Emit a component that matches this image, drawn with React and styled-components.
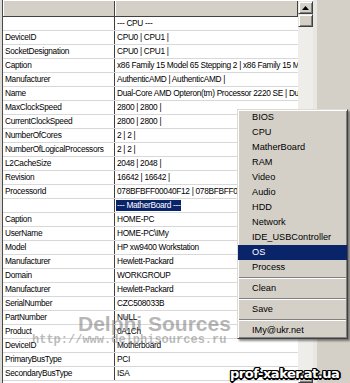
import styled, { createGlobalStyle } from "styled-components";

const GlobalStyle = createGlobalStyle`
	html, body {
		margin: 0;
		padding: 0;
		background: #d4d0c8;
		overflow: hidden;
	}
`;

const ROWS = [
	["", "--- CPU ---"],
	["DeviceID", "CPU0 | CPU1 |"],
	["SocketDesignation", "CPU0 | CPU1 |"],
	["Caption", "x86 Family 15 Model 65 Stepping 2 | x86 Family 15 Model 65 Stepping 2 |"],
	["Manufacturer", "AuthenticAMD | AuthenticAMD |"],
	["Name", "Dual-Core AMD Opteron(tm) Processor 2220 SE | Dual-Core AMD Opteron(tm) Processor 2220 SE |"],
	["MaxClockSpeed", "2800 | 2800 |"],
	["CurrentClockSpeed", "2800 | 2800 |"],
	["NumberOfCores", "2 | 2 |"],
	["NumberOfLogicalProcessors", "2 | 2 |"],
	["L2CacheSize", "2048 | 2048 |"],
	["Revision", "16642 | 16642 |"],
	["ProcessorId", "078BFBFF00040F12 | 078BFBFF00040F12 |"],
	["", "--- MatherBoard ---", true],
	["Caption", "HOME-PC"],
	["UserName", "HOME-PC\\IMy"],
	["Model", "HP xw9400 Workstation"],
	["Manufacturer", "Hewlett-Packard"],
	["Domain", "WORKGROUP"],
	["Manufacturer", "Hewlett-Packard"],
	["SerialNumber", "CZC508033B"],
	["PartNumber", "NULL"],
	["Product", "0A1Ch"],
	["DeviceID", "Motherboard"],
	["PrimaryBusType", "PCI"],
	["SecondaryBusType", "ISA"],
];

const MENU = [
	"BIOS", "CPU", "MatherBoard", "RAM", "Video", "Audio", "HDD", "Network",
	"IDE_USBController", "OS", "Process", "-", "Clean", "-", "Save", "-", "IMy@ukr.net",
];

const Page = styled.div`
	position: relative;
	width: 350px;
	height: 383px;
	overflow: hidden;
	display: flex;
	background: #d4d0c8;
	font-family: "Liberation Sans", Arial, sans-serif;
	color: #000;
`;

const Frame = styled.div`
	display: flex;
	width: 317px;
	height: 100%;
	border-left: 2px solid #dcdad6;
	box-sizing: border-box;
`;

const Inner = styled.div`
	display: flex;
	flex: 1;
	border-left: 1px solid #4a4a4a;
`;

const Grid = styled.div`
	width: 295px;
	display: flex;
	flex-direction: column;
	background: #fff;
	overflow: hidden;
`;

const HeaderRow = styled.div`
	display: flex;
	flex: none;
	height: 17px;
	box-sizing: border-box;
	background: #d4d0c8;
	border-top: 1px solid #fff;
	border-bottom: 1px solid #404040;
`;

const HeaderCell = styled.div`
	width: ${({ $w }) => ($w ? `${$w}px` : "auto")};
	flex: ${({ $w }) => ($w ? "none" : "1")};
	box-sizing: border-box;
	border-right: 1px solid #404040;
	box-shadow: inset 1px 0 #fff;
`;

const Row = styled.div`
	display: flex;
	flex: none;
	height: 14px;
	box-sizing: border-box;
	border-bottom: 1px solid #d8d8d8;
`;

const Cell = styled.div`
	box-sizing: border-box;
	padding-left: 2px;
	font-size: 8.3px;
	letter-spacing: -0.3px;
	line-height: 13px;
	white-space: nowrap;
	overflow: hidden;
`;

const KeyCell = styled(Cell)`
	width: 112px;
	flex: none;
	border-right: 1px solid #404040;
`;

const ValueCell = styled(Cell)`
	flex: 1;
`;

const Selected = styled.span`
	display: inline-block;
	background: #0a246a;
	color: #fff;
	line-height: 11px;
	padding: 0 1px;
	margin-left: -1px;
`;

const Scroll = styled.div`
	width: 15px;
	display: flex;
	flex-direction: column;
	background: #eeede9;
	border-top: 1px solid #fff;
`;

const ScrollButton = styled.div`
	height: 13px;
	flex: none;
	box-sizing: border-box;
	background: #d4d0c8;
	border: 1px solid;
	border-color: #e8e6e2 #404040 #404040 #e8e6e2;
	box-shadow: inset 1px 1px #fff, inset -1px -1px #808080;
	display: flex;
	align-items: center;
	justify-content: center;
`;

const Spacer = styled.div`
	flex: 1;
`;

const RightEdge = styled.div`
	width: 4px;
	background: #e9e7e3;
`;

const Menu = styled.div`
	position: absolute;
	left: 237px;
	top: 109px;
	width: 111px;
	box-sizing: border-box;
	background: #d4d0c8;
	border: 1px solid;
	border-color: #dedbd5 #404040 #404040 #dedbd5;
	box-shadow: inset 1px 1px #fff, inset -1px -1px #808080, 2px 2px 2px rgba(0, 0, 0, 0.45);
	font-size: 9.2px;
`;

const MenuItem = styled.div`
	height: 15px;
	line-height: 15px;
	padding-left: 14px;
	white-space: nowrap;
	background: ${({ $active }) => ($active ? "#0a246a" : "transparent")};
	color: ${({ $active }) => ($active ? "#fff" : "#000")};
`;

const Separator = styled.div`
	height: 6px;
	display: flex;
	flex-direction: column;
	justify-content: center;
	padding: 0 1px;

	&::before {
		content: "";
		display: block;
		height: 1px;
		background: #808080;
		border-bottom: 1px solid #fff;
	}
`;

const BigMark = styled.div`
	position: absolute;
	left: 78px;
	top: 313px;
	font-family: "Liberation Sans", Arial, sans-serif;
	font-weight: bold;
	font-size: 21px;
	line-height: 21px;
	color: rgba(110, 110, 110, 0.5);
	white-space: nowrap;
`;

const UrlMark = styled.div`
	position: absolute;
	left: 32px;
	top: 334px;
	font-family: "Liberation Mono", monospace;
	font-weight: bold;
	font-size: 12px;
	line-height: 12px;
	color: rgba(120, 120, 120, 0.5);
	white-space: nowrap;
`;

const SiteMark = styled.div`
	position: absolute;
	left: 230px;
	top: 367px;
	font-family: "DejaVu Sans", sans-serif;
	font-weight: bold;
	font-size: 13px;
	letter-spacing: -0.5px;
	line-height: 14px;
	color: #fff;
	white-space: nowrap;
	text-shadow: 1px 0 #000, -1px 0 #000, 0 1px #000, 0 -1px #000, 1px 1px #000,
		-1px -1px #000, 1px -1px #000, -1px 1px #000, 2px 0 #000, 0 2px #000;
`;

const Arrow = ({ down }) => (
	<svg width="7" height="4" viewBox="0 0 7 4">
		<polygon points={down ? "0,0 7,0 3.5,4" : "0,4 7,4 3.5,0"} fill="#000" />
	</svg>
);

const App = () => (
	<>
		<GlobalStyle />
		<Page>
			<Frame>
				<Inner>
					<Grid>
						<HeaderRow>
							<HeaderCell $w={112} />
							<HeaderCell />
						</HeaderRow>
						{ROWS.map(([key, value, sel], i) => (
							<Row key={i}>
								<KeyCell>{key}</KeyCell>
								<ValueCell>{sel ? <Selected>{value}</Selected> : value}</ValueCell>
							</Row>
						))}
					</Grid>
					<Scroll>
						<ScrollButton>
							<Arrow />
						</ScrollButton>
						<ScrollButton />
						<Spacer />
						<ScrollButton>
							<Arrow down />
						</ScrollButton>
					</Scroll>
					<RightEdge />
				</Inner>
			</Frame>

			<BigMark>Delphi Sources</BigMark>
			<UrlMark>http://www.delphisources.ru</UrlMark>

			<Menu>
				{MENU.map((item, i) =>
					item === "-" ? (
						<Separator key={i} />
					) : (
						<MenuItem key={i} $active={item === "OS"}>
							{item}
						</MenuItem>
					)
				)}
			</Menu>

			<SiteMark>prof-xaker.at.ua</SiteMark>
		</Page>
	</>
);

export default App;
